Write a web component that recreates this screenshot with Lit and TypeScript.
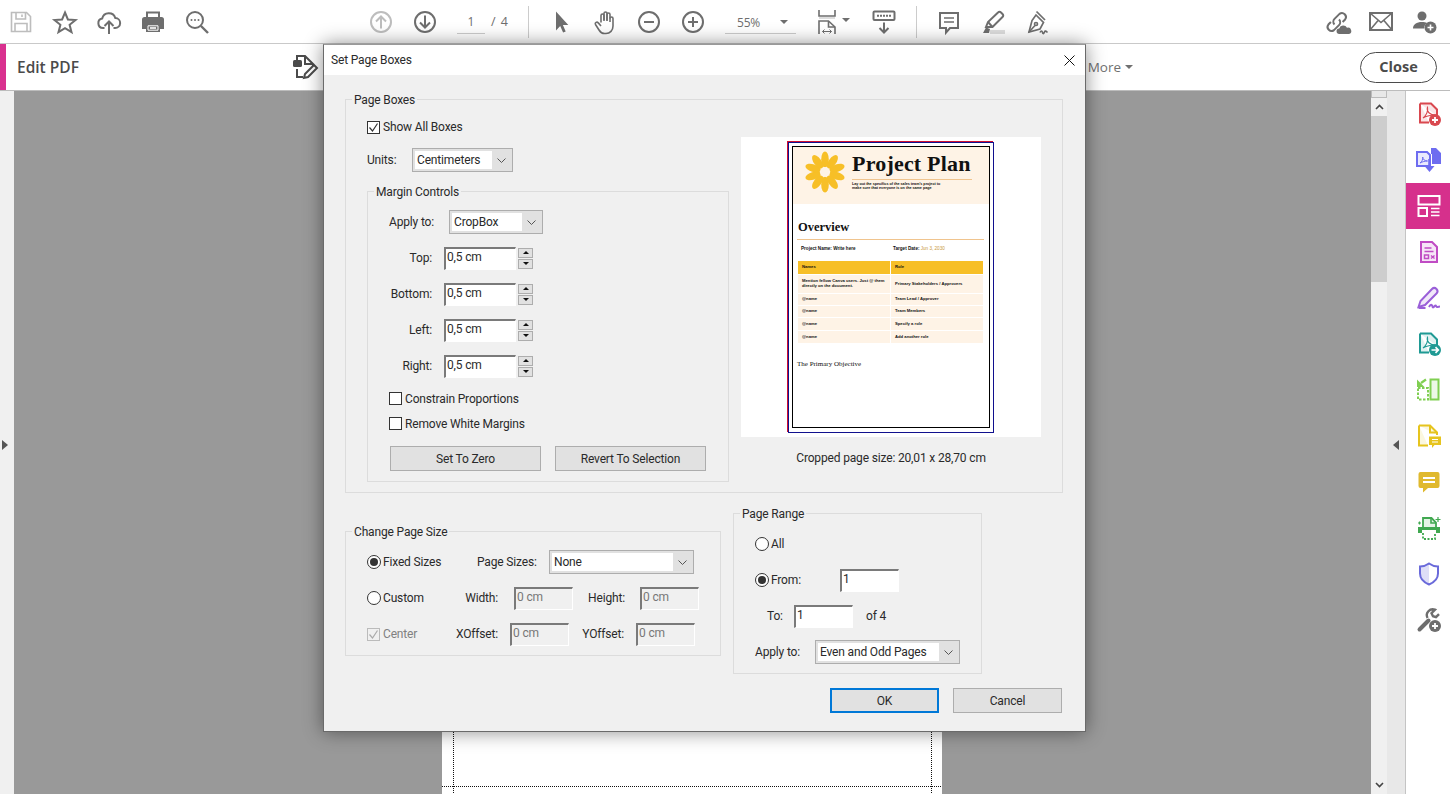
import { LitElement, html, svg, css } from 'lit';
import { customElement } from 'lit/decorators.js';

const ICONS: Record<string, unknown> = {
  save: svg`<g stroke-width="1.6"><path d="M2.5 2.5h15l4 4v15h-19z"/><path d="M7 2.5v6.5h9.5V2.5M13 4.5v2.5"/><path d="M6 21.5v-8h12v8"/></g>`,
  star: svg`<path d="M12 2.5l2.9 7 7.6.5-5.9 4.8 1.9 7.4-6.5-4-6.5 4 1.9-7.4L1.5 10l7.6-.5z"/>`,
  upload: svg`<path d="M7.5 18H6a4.8 4.8 0 0 1-.8-9.5A6.8 6.8 0 0 1 18.3 8a5 5 0 0 1-.3 10h-1.5"/><path d="M12 24V11.5M7.5 16l4.500-4.500 4.500 4.500"/>`,
  print: svg`<path d="M6 7V2.500h12V7"/><path class="f" d="M1 9.500a2.500 2.500 0 0 1 2.500-2.500h17A2.500 2.500 0 0 1 23 9.500V19h-4v-5H5v5H1z"/><path class="f" d="M5 14h14v8H5z"/><path d="M9 18h6" stroke="#fff" stroke-width="1.600"/><path d="M7 15.800h10v4.400H7z" stroke="#fff" stroke-width="1"/>`,
  find: svg`<circle cx="10" cy="10" r="8"/><path d="M16 16l7 7" stroke-width="2.400"/><circle class="f" cx="6.500" cy="10" r="1"/><circle class="f" cx="10" cy="10" r="1"/><circle class="f" cx="13.500" cy="10" r="1"/>`,
  up: svg`<circle cx="12" cy="12" r="10"/><path d="M12 18.500V6.500M7 11.500l5-5 5 5"/>`,
  down: svg`<circle cx="12" cy="12" r="10"/><path d="M12 5.500v12M7 12.500l5 5 5-5"/>`,
  cursor: svg`<path class="f" d="M7 1.500v19l4.200-4.600 2.900 6.600 2.600-1-2.800-6.600h5.400z"/>`,
  hand: svg`<g stroke-width="1.600"><path d="M8 12.500V5.500a1.500 1.500 0 0 1 3 0V11"/><path d="M11 10V3.500a1.500 1.500 0 0 1 3 0V11"/><path d="M14 10.500V4.500a1.500 1.500 0 0 1 3 0V12"/><path d="M17 8.500a1.500 1.500 0 0 1 3 0V16c0 4.400-3 7.500-7 7.500h-1.500c-2.500 0-4-1-5.500-3.500L2.500 14.500c-1-1.800 1.500-3.200 2.800-1.600L8 16"/></g>`,
  minus: svg`<circle cx="12" cy="12" r="10"/><path d="M7 12h10"/>`,
  plus: svg`<circle cx="12" cy="12" r="10"/><path d="M7 12h10M12 7v10"/>`,
  fit: svg`<path d="M4 0v6h16V0" stroke-width="1.600"/><path d="M4 8h16" stroke="#ddd" stroke-width="2"/><path d="M4 24V11h9.500l6.500 6v7" stroke-width="1.600"/><path d="M13.500 11v6h6.500" stroke-width="1.600"/><path d="M7.500 21.500h9M9.500 19.500l-2 2 2 2M14.500 19.500l2 2-2 2" stroke-width="1"/>`,
  bar: svg`<rect x="1.500" y="1.500" width="21" height="8.500" rx="1"/><path d="M5 5.800h14" stroke-dasharray="2 1" stroke-width="2"/><path d="M12 12.500v10M7.500 18l4.500 4.500 4.500-4.500"/>`,
  comment: svg`<path d="M3 3h18v15h-8l-4 4.500V18H3z"/><path d="M7 8h10M7 12h10" stroke-width="1.600"/>`,
  mark: svg`<path d="M5 17l2-5L17 2.500c1-1 2-1 3 0L21.500 4c1 1 1 2 0 3L11.500 17z"/><path d="M7 12l4.500 5" /><path class="f" d="M2 23l3-5.500 4 1.500-1 4z"/><rect class="lite" x="9" y="20" width="15" height="4"/>`,
  sign: svg`<g stroke-width="1.700"><path d="M11 5l7.500 7.500-3.500 6.500L4 22l3-11.500z"/><path d="M11.500 1.500l8.500 8.500"/><path d="M4 22l6-6.500"/><circle cx="11" cy="14" r="1.500"/></g><path d="M15 22.500c1-2 2-2 2.500 0s1.500 1 2-.5 1.500-1 3 .5" stroke-width="1.600"/>`,
  link: svg`<path d="M9.500 14.500a4 4 0 0 1 0-5.600l5-5a4 4 0 0 1 5.600 5.600l-2.500 2.500"/><path d="M14 9.500a4 4 0 0 1 0 5.600l-5 5a4 4 0 0 1-5.600-5.600l2.500-2.500"/><path class="f" d="M14.500 24a2.800 2.800 0 0 1-.3-5.600 4.200 4.200 0 0 1 7.800-.6 3.200 3.200 0 0 1 2 6.200z"/>`,
  mail: svg`<rect x="1" y="3" width="22" height="17"/><path d="M1 3l11 9.500L23 3M1 20l8.500-10M23 20l-8.500-10" stroke-width="1.600"/>`,
  user: svg`<circle class="f" cx="9" cy="6" r="4.500"/><path class="f" d="M0 18.500c0-4 3.500-6.500 9-6.500 2 0 3.700.4 5 1-1.800 1.200-2.800 3.200-2.900 5.500z"/><circle class="f" cx="17.500" cy="17.500" r="6"/><path d="M14.500 17.500h6M17.500 14.500v6" stroke="#fff" stroke-width="1.600"/>`,
  edit: svg`<path d="M4 5V1h8l8 8v2M4 14v8h6"/><path d="M12 1v8h8"/><rect class="f" x="0" y="5" width="9" height="7" rx="1.500"/><path d="M11 23l1-4 9-9 3 3-9 9z"/>`,

  pdfadd: svg`<path class="tint" d="M3 1.500h11l6 6v6.500M3 1.500v19h9"/><path d="M6 16c3-2 5.500-7 4.500-10.500-1.500 4 3 7.500 7 7.500-4 .2-8 .8-11.500 3z" stroke-width="1.100"/><circle class="f" cx="18" cy="18" r="6"/><path d="M15 18h6M18 15v6" stroke="#fff" stroke-width="1.800"/>`,
  combine: svg`<path class="tint" d="M0 4h10l3 3v11H0z"/><path class="f" d="M14 0h5l5 5v11h-9V6h-1z"/><path d="M3 15c2-1.500 3-3.500 2.700-6 0 2.500 2.300 4 4.800 4-2.500 0-5 .7-7.500 2z" stroke-width="1"/><path d="M12.500 11v10" stroke-width="2.600"/><path class="f" d="M7.500 18h10l-5 6z"/>`,
  layout: svg`<rect x="1.500" y="2" width="21" height="8.500"/><rect x="1.500" y="14" width="8.500" height="8"/><path d="M14 14.500h8.500M14 18h8.500M14 21.500h8.500" stroke-width="1.300"/>`,
  redact: svg`<path class="tint" d="M4 2h11l5 5v15H4z"/><path d="M7.500 8h7M7.500 11.500h9M7.500 15h4v3.500h-4z" stroke-width="1.500"/><path d="M14 15.500l3.500 3M17.500 15.500l-3.500 3" stroke-width="1.400"/>`,
  pensign: svg`<path class="tint" d="M1.500 21l2-6L15 3c1.500-1.500 3-1.500 4.500 0 1.500 1.500 1.500 3 0 4.500L8 19z"/><path d="M1.500 22h7"/><path d="M12 21c1.500-3 3-3 3.500-.5s2-1 3-1 .5 2 2 1.500 1.500-.5 2.500-.5"/>`,
  pdfout: svg`<path class="tint" d="M3 1.500h11l6 6v6.500M3 1.500v19h9"/><path d="M6 16c3-2 5.500-7 4.500-10.500-1.500 4 3 7.500 7 7.500-4 .2-8 .8-11.500 3z" stroke-width="1.100"/><circle class="f" cx="18" cy="18" r="6"/><path d="M14.500 18h6.500M18.500 15.200l2.800 2.800-2.800 2.800" stroke="#fff" stroke-width="1.700"/>`,
  organize: svg`<path d="M1 10h10v11.500H1z" stroke-dasharray="2.500 1.500"/><path class="tint" d="M13.500 1.500h8v20h-8z"/><path d="M4 5l5-3.500" stroke-width="2.200"/><path class="f" d="M0 1.500v7.500h7.500z"/>`,
  review: svg`<path class="tint" d="M2 1.500h11l7 7V11M2 1.500v20h9"/><path d="M13 1.500v7h7" /><path class="f" d="M12 12.500h12V21h-6.500L15 24v-3h-3z"/><path d="M15 15.500h6M15 18h6" stroke="#fff" stroke-width="1.200"/>`,
  note: svg`<path class="f" d="M3.500 2h17A2 2 0 0 1 22.500 4v12a2 2 0 0 1-2 2H11l-5 4.500V18H3.500a2 2 0 0 1-2-2V4a2 2 0 0 1 2-2z"/><path d="M6 8h12M6 12h12" stroke="#fff" stroke-width="2"/>`,
  printer: svg`<path class="tint" d="M6 12V2h8.500L19 6.500V12" stroke-width="1.800"/><path d="M14 2v5h5" stroke-width="1.600"/><path class="f" d="M1 11h22v6h-4v-3H5v3H1z"/><path d="M6 17v6h12v-6" stroke-dasharray="2 1.500" stroke-width="1.800"/><path d="M21 1v5M18.500 3.500h5M2.500 5.500v3M1 7h3" stroke-width="1.200"/>`,
  shield: svg`<path class="half" d="M12 1.500v21c-6-2.500-9-6-9-11V4.500c3.500 0 6.500-1.200 9-3z" stroke="none"/><path d="M12 1.500c2.500 1.800 5.500 3 9 3V11.500c0 5-3 8.500-9 11-6-2.500-9-6-9-11V4.500c3.500 0 6.500-1.200 9-3z"/>`,
  tools: svg`<path d="M2.500 21.500L11.500 12.500" stroke-width="4" stroke-linecap="round"/><path d="M10.500 10a6 6 0 0 1 7.500-8.300l-3.500 3.500 1.500 3 3 1 3-3" stroke-width="2.400"/><circle class="f" cx="18" cy="18" r="6"/><path d="M15 18h6M18 15v6" stroke="#fff" stroke-width="1.800"/>`,
};

const ic = (name: string) => html`<svg class="ic" viewBox="0 0 24 24">${ICONS[name]}</svg>`;
const chevron = html`<svg class="chev" viewBox="0 0 9 5"><path d="M.5.500l4 4 4-4"/></svg>`;
const caret = html`<svg class="caret" viewBox="0 0 10 5"><path d="M0 0h10L5 5z"/></svg>`;
const SIDE = [
  ['pdfadd', 'red'], ['combine', 'blue'], ['layout', 'on'], ['redact', 'magenta'], ['pensign', 'violet'], ['pdfout', 'teal'],
  ['organize', 'lime'], ['review', 'gold'], ['note', 'amber'], ['printer', 'green'], ['shield', 'indigo'], ['tools', 'gray'],
];
const ROLES = [
  ['Mention fellow Canva users. Just @ them directly on the document.', 'Primary Stakeholders / Approvers'],
  ['@name', 'Team Lead / Approver'],
  ['@name', 'Team Members'],
  ['@name', 'Specify a role'],
  ['@name', 'Add another role'],
];

@customElement('app-root')
export class AppRoot extends LitElement {
  static styles = css`
    :host { display: block; position: relative; width: 1450px; height: 794px; overflow: hidden; background: #fff; font-family: Roboto, "Liberation Sans", sans-serif; font-size: 12px; color: #222; }
    * { box-sizing: border-box; }
    .ic { width: 24px; height: 24px; display: block; fill: none; stroke: currentColor; stroke-width: 2; overflow: visible; }
    .ic .f { fill: currentColor; stroke: none; }
    .ic .tint { fill: color-mix(in srgb, currentColor 14%, transparent); }
    .ic .half { fill: color-mix(in srgb, currentColor 22%, transparent); }
    .ic .lite { fill: #ddd; stroke: none; }

    /* top toolbar */
    .tools { height: 44px; display: flex; align-items: center; background: #fff; border-bottom: 1px solid #c9c9c9; color: #6e6e6e; font-family: "Open Sans", sans-serif; }
    .cell { width: 44px; height: 43px; display: flex; align-items: center; justify-content: center; flex: none; }
    .cell.save { margin-left: -1px; color: #bdbdbd; }
    .cell.off { margin-left: 140px; color: #bdbdbd; }
    .pagebox { width: 28px; height: 22px; margin-left: 10px; border-bottom: 1px solid #ccc; text-align: center; line-height: 20px; font-size: 12px; margin-top: 2px; }
    .of { width: 37px; margin-left: 6px; font-size: 12.5px; word-spacing: 2px; }
    .sep { width: 1px; height: 32px; background: #ccc; flex: none; }
    .after { margin-left: 10px; }
    .zoombox { width: 71px; height: 22px; margin: 2px 0 0 10px; border-bottom: 1px solid #ccc; display: flex; align-items: center; font-size: 12px; padding-left: 12px; letter-spacing: -.2px; }
    .caret { width: 8px; height: 4px; fill: #6e6e6e; display: block; }
    .zoombox .caret { margin-left: 20px; }
    .fit { justify-content: flex-start; padding-left: 10px; margin-left: 9px; }
    .fit .caret { margin: -4px 0 0 3px; flex: none; }
    .barcell { margin-left: 13px; }
    .right { margin-left: auto; display: flex; padding-right: 3px; }

    /* tool title bar */
    .bar { height: 47px; display: flex; align-items: center; background: #fff; border-bottom: 1px solid #bcbcbc; color: #4b4b4b; font-family: "Open Sans", sans-serif; }
    .strip { width: 6px; height: 46px; background: #d9318f; flex: none; }
    .title { width: 276px; margin-left: 11px; font-size: 15.5px; font-weight: 600; }
    .more { margin-left: auto; margin-right: 227px; display: flex; align-items: center; gap: 4px; font-size: 13.5px; color: #707070; }
    .more .caret { fill: #707070; }
    .close { width: 77px; height: 31px; margin-right: 13px; border: 1.5px solid #4b4b4b; border-radius: 16px; text-align: center; line-height: 27px; font-size: 14.5px; font-weight: 700; }

    /* viewer */
    .view { height: 703px; display: flex; background: #fff; }
    .lpane { width: 14px; background: #f0f0f0; display: flex; align-items: center; flex: none; padding: 4px 0 0 2px; }
    .tri { width: 0; height: 0; border-top: 5px solid transparent; border-bottom: 5px solid transparent; }
    .tri.r { border-left: 6px solid #555; }
    .tri.l { border-right: 6px solid #555; }
    .doc { width: 1357px; background: #999; padding: 9px 0 0 428px; overflow: hidden; flex: none; }
    .page { width: 500px; height: 800px; background-color: #fff;
      background-image: repeating-linear-gradient(to bottom, #111 0 1px, transparent 1px 2px), repeating-linear-gradient(to bottom, #111 0 1px, transparent 1px 2px), repeating-linear-gradient(to right, #111 0 1px, transparent 1px 2px);
      background-size: 1px 100%, 1px 100%, 100% 1px; background-position: 11px 0, 489px 0, 0 686px; background-repeat: no-repeat; }
    .scroll { width: 16px; background: #f0f0f0; display: flex; flex-direction: column; flex: none; }
    .nub { height: 7px; background: #e8e8e8; border: 1px solid #bbb; border-top: 0; }
    .sbtn { height: 18px; display: flex; align-items: center; justify-content: center; }
    .sbtn svg { width: 9px; height: 6px; fill: none; stroke: #444; stroke-width: 1.6; }
    .thumb { height: 166px; background: #cdcdcd; }
    .gap { flex: 1; }
    .rail { width: 19px; background: #e8e8e8; border-right: 1px solid #c4c4c4; display: flex; align-items: center; justify-content: center; flex: none; padding-top: 4px; }
    .side { flex: 1; display: flex; flex-direction: column; background: #fff; }
    .tool { height: 46px; display: flex; align-items: center; justify-content: center; padding-left: 1px; }
    .red { color: #d9484f; } .blue { color: #6d6cf0; } .magenta { color: #c04cc4; } .violet { color: #9a5fd8; } .teal { color: #1f9a94; } .lime { color: #80cf52; }
    .gold { color: #e6c41e; } .amber { color: #e0b92e; } .green { color: #40a850; } .indigo { color: #6a6ada; } .gray { color: #6e6e6e; }
    .on { color: #fff; background: #d6308c; }

    /* dialog window */
    .dialog { position: absolute; left: 323px; top: 44px; width: 763px; height: 688px; background: #f0f0f0; border: 1px solid #6a6a6a; border-top-color: #999; box-shadow: 0 0 18px rgba(0, 0, 0, .45); letter-spacing: -.16px; color: #2a2a2a; }
    .dhead { height: 30px; background: #fff; display: flex; align-items: center; justify-content: space-between; padding: 0 10px 0 7px; }
    .x { width: 11px; height: 11px; stroke: #111; stroke-width: 1; fill: none; display: block; }
    .dbody { padding: 24px 22px 0 21px; }
    .group { border: 1px solid #dcdcdc; padding-left: 21px; }
    .legend { width: fit-content; height: 15px; line-height: 17px; margin: -8px 0 0 -15px; padding: 0 2px; background: #f0f0f0; white-space: nowrap; }
    .g-boxes { height: 394px; display: flex; flex-direction: column; }
    .cols { display: flex; gap: 12px; }
    .lcol { width: 362px; flex: none; }
    .rcol { width: 300px; flex: none; margin-top: 30px; }
    .row { display: flex; align-items: center; white-space: nowrap; }
    .h24 { height: 24px; }
    .check { width: 13px; height: 13px; border: 1px solid #333; background: #fff; margin-right: 3px; flex: none; display: flex; align-items: center; justify-content: center; }
    .check svg { width: 11px; height: 11px; stroke: #333; stroke-width: 1.200; fill: none; display: block; }
    .check.dis { border-color: #bbb; background: #f0f0f0; }
    .check.dis svg { stroke: #aaa; }
    .mt14 { margin-top: 14px; }
    .mt13 { margin-top: 13px; }
    .radio { width: 14px; height: 14px; border: 1px solid #333; border-radius: 50%; background: #fff; margin-right: 2px; flex: none; display: flex; align-items: center; justify-content: center; }
    .radio.sel::after { content: ""; width: 8px; height: 8px; border-radius: 50%; background: #333; }
    .select { height: 24px; border: 1px solid #adadad; background: #e1e1e1; padding: 2px; display: flex; align-items: center; flex: none; }
    .val { flex: 1; height: 18px; line-height: 18px; background: #fff; padding-left: 2px; }
    .arrow { width: 18px; display: flex; justify-content: center; }
    .chev { width: 9px; height: 5px; fill: none; stroke: #555; stroke-width: 1; display: block; }
    .s-units { width: 101px; margin-left: 15px; }
    .s-crop { width: 94px; }
    .s-page { width: 145px; }
    .s-range { width: 145px; }
    .units-label { width: 30px; }
    .g-margin { height: 291px; margin-top: 19px; }
    .apply { width: 60px; }
    .stack { display: flex; flex-direction: column; gap: 12px; }
    .g-margin .first { margin-top: 11px; }
    .g-margin .stack { margin-top: 12px; }
    .lab { width: 43px; margin-right: 12px; text-align: right; }
    .input { height: 23px; border: 2px solid #fff; border-top-color: #7a7a7a; border-left-color: #7a7a7a; border-right-width: 1px; border-bottom-width: 1px; background: #fff; padding-left: 1px; line-height: 17px; flex: none; overflow: hidden; }
    .input.dis { background: #f0f0f0; color: #777; }
    .i72 { width: 72px; }
    .i59 { width: 59px; }
    .spin { width: 15px; margin-left: 2px; display: flex; flex-direction: column; gap: 1px; flex: none; }
    .spin span { height: 10px; background: #e1e1e1; border: 1px solid #adadad; display: flex; align-items: center; justify-content: center; }
    .spin i { width: 0; height: 0; border-left: 3px solid transparent; border-right: 3px solid transparent; }
    .spin .u { border-bottom: 3px solid #111; }
    .spin .d { border-top: 3px solid #111; }
    .opts { margin-top: 14px; display: flex; flex-direction: column; gap: 12px; }
    .opts .row { height: 13px; }
    .btns { display: flex; gap: 14px; margin: 16px 0 0 1px; }
    .btn { height: 25px; background: #e1e1e1; border: 1px solid #adadad; display: flex; align-items: center; justify-content: center; flex: none; }
    .w151 { width: 151px; }
    .w109 { width: 109px; }
    .btn.def { border: 2px solid #0078d7; }

    /* crop preview */
    .preview { width: 300px; height: 300px; background: #fff; display: flex; align-items: flex-start; justify-content: center; padding-top: 5px; letter-spacing: 0; }
    .cap { margin-top: 14px; line-height: 15px; text-align: center; }
    .sheet { width: 206px; height: 291px; border: 1px solid #10108e; box-shadow: -1px -1px 0 #d01030; padding: 3px 3px 4px; background: #fff; }
    .pg { height: 100%; border: 1px solid #000; overflow: hidden; color: #111; font-family: "Liberation Sans", sans-serif; }
    .hero { height: 57px; background: #fef3e6; display: flex; padding-left: 10px; }
    .flower { width: 44px; height: 44px; margin-top: 3px; flex: none; }
    .hero-t { margin-left: 5px; padding-top: 5px; }
    .pt { font: 700 22px/24px "Liberation Serif", serif; letter-spacing: .2px; white-space: nowrap; }
    .prule { width: 120px; height: 1px; background: #f0c48e; margin-top: 3px; }
    .ps { font-size: 3.7px; line-height: 3.600px; font-weight: 700; margin-top: 3px; white-space: nowrap; }
    .ov { font: 700 12.500px/14px "Liberation Serif", serif; margin: 16px 0 0 5px; }
    .ovrule { width: 187px; height: 1px; background: #f0c48e; margin: 5px 0 0 4px; }
    .fields { display: flex; margin: 6px 0 0 8px; font-size: 4.600px; line-height: 6px; font-weight: 700; white-space: nowrap; }
    .fields div { width: 92px; }
    .date { color: #c9983c; font-weight: 400; }
    .tbl { display: grid; width: 185px; margin: 9px 0 0 5px; grid-template-columns: 92px 92px; grid-template-rows: 13px 18px 11px 11px 12px 12px; gap: 1px; font-size: 4.200px; line-height: 4.800px; font-weight: 700; }
    .tbl div { background: #fef3e6; padding: 0 3px 0 4px; display: flex; align-items: center; }
    .tbl .hd { background: #f7bf27; }
    .obj { font: 7px/10px "Liberation Serif", serif; margin: 16px 0 0 4px; white-space: nowrap; }

    /* lower panels */
    .lower { display: flex; align-items: flex-start; gap: 12px; }
    .g-size { width: 376px; height: 125px; margin-top: 38px; }
    .g-range { width: 249px; height: 161px; margin-top: 20px; }
    .g-size .stack, .g-range .stack { margin-top: 11px; }
    .opt110 { width: 110px; }
    .opt96 { width: 96px; }
    .opt89 { width: 89px; }
    .w72 { width: 72px; }
    .disabled { color: #808080; }
    .l-w { width: 51px; padding-right: 16px; text-align: right; }
    .l-x { width: 54px; padding-right: 12px; text-align: right; }
    .l-h { width: 54px; margin-left: 13px; padding-right: 15px; text-align: right; }
    .l-y { width: 54px; margin-left: 13px; padding-right: 12px; text-align: right; }
    .from { width: 85px; }
    .to { width: 39px; padding-left: 12px; }
    .apply-r { width: 60px; }
    .of4 { margin-left: 13px; }
    .footer { display: flex; justify-content: flex-end; gap: 14px; padding-right: 1px; margin-top: 14px; }
  `;

  spinRow(label: string) {
    return html`<div class="row h24">
      <span class="lab">${label}</span>
      <div class="input i72">0,5 cm</div>
      <div class="spin"><span><i class="u"></i></span><span><i class="d"></i></span></div>
    </div>`;
  }

  select(cls: string, value: string) {
    return html`<div class="select ${cls}"><div class="val">${value}</div><div class="arrow">${chevron}</div></div>`;
  }

  preview() {
    const petals = Array.from({ length: 10 }, (_, i) => svg`<ellipse cx="22" cy="9.500" rx="3.800" ry="8" fill="#f7bf27" transform="rotate(${i * 36} 22 22)"/>`);
    return html`<div class="preview"><div class="sheet"><div class="pg">
      <div class="hero">
        <svg class="flower" viewBox="0 0 44 44">${petals}<circle cx="22" cy="22" r="5" fill="#fef3e6"/></svg>
        <div class="hero-t">
          <div class="pt">Project Plan</div>
          <div class="prule"></div>
          <div class="ps">Lay out the specifics of the sales team's project to<br>make sure that everyone is on the same page</div>
        </div>
      </div>
      <div class="ov">Overview</div>
      <div class="ovrule"></div>
      <div class="fields"><div>Project Name: Write here</div><div>Target Date: <span class="date">Jun 3, 2030</span></div></div>
      <div class="tbl">
        <div class="hd">Names</div><div class="hd">Role</div>
        ${ROLES.map(r => html`<div>${r[0]}</div><div>${r[1]}</div>`)}
      </div>
      <div class="obj">The Primary Objective</div>
    </div></div></div>`;
  }

  dialog() {
    const tick = html`<svg viewBox="0 0 11 11"><path d="M1.500 5.500l3 3.500 5-7.500"/></svg>`;
    return html`<div class="dialog">
      <div class="dhead"><span>Set Page Boxes</span><svg class="x" viewBox="0 0 11 11"><path d="M.500.500l10 10M10.500.500l-10 10"/></svg></div>
      <div class="dbody">
        <div class="group g-boxes">
          <div class="legend">Page Boxes</div>
          <div class="cols">
            <div class="lcol">
              <div class="row mt13"><span class="check">${tick}</span>Show All Boxes</div>
              <div class="row h24 mt14"><span class="units-label">Units:</span>${this.select('s-units', 'Centimeters')}</div>
              <div class="group g-margin">
                <div class="legend">Margin Controls</div>
                <div class="row h24 first"><span class="apply">Apply to:</span>${this.select('s-crop', 'CropBox')}</div>
                <div class="stack">
                  ${['Top:', 'Bottom:', 'Left:', 'Right:'].map(l => this.spinRow(l))}
                </div>
                <div class="opts">
                  <div class="row"><span class="check"></span>Constrain Proportions</div>
                  <div class="row"><span class="check"></span>Remove White Margins</div>
                </div>
                <div class="btns"><div class="btn w151">Set To Zero</div><div class="btn w151">Revert To Selection</div></div>
              </div>
            </div>
            <div class="rcol">
              ${this.preview()}
              <div class="cap">Cropped page size: 20,01 x 28,70 cm</div>
            </div>
          </div>
        </div>
        <div class="lower">
          <div class="group g-size">
            <div class="legend">Change Page Size</div>
            <div class="stack">
              <div class="row h24">
                <span class="row opt110"><span class="radio sel"></span>Fixed Sizes</span>
                <span class="w72">Page Sizes:</span>${this.select('s-page', 'None')}
              </div>
              <div class="row h24">
                <span class="row opt96"><span class="radio"></span>Custom</span>
                <span class="l-w">Width:</span><div class="input dis i59">0 cm</div>
                <span class="l-h">Height:</span><div class="input dis i59">0 cm</div>
              </div>
              <div class="row h24">
                <span class="row opt89 disabled"><span class="check dis">${tick}</span>Center</span>
                <span class="l-x">XOffset:</span><div class="input dis i59">0 cm</div>
                <span class="l-y">YOffset:</span><div class="input dis i59">0 cm</div>
              </div>
            </div>
          </div>
          <div class="group g-range">
            <div class="legend">Page Range</div>
            <div class="stack">
              <div class="row h24"><span class="radio"></span>All</div>
              <div class="row h24"><span class="row from"><span class="radio sel"></span>From:</span><div class="input i59">1</div></div>
              <div class="row h24"><span class="to">To:</span><div class="input i59">1</div><span class="of4">of 4</span></div>
              <div class="row h24"><span class="apply-r">Apply to:</span>${this.select('s-range', 'Even and Odd Pages')}</div>
            </div>
          </div>
        </div>
        <div class="footer"><div class="btn def w109">OK</div><div class="btn w109">Cancel</div></div>
      </div>
    </div>`;
  }

  render() {
    const cell = (n: string) => html`<div class="cell">${ic(n)}</div>`;
    return html`
      <div class="tools">
        <div class="cell save">${ic('save')}</div>
        ${['star', 'upload', 'print', 'find'].map(cell)}
        <div class="cell off">${ic('up')}</div>
        ${cell('down')}
        <div class="pagebox">1</div>
        <div class="of">/ 4</div>
        <div class="sep"></div>
        <div class="after"></div>
        ${['cursor', 'hand', 'minus', 'plus'].map(cell)}
        <div class="zoombox">55%${caret}</div>
        <div class="cell fit">${ic('fit')}${caret}</div>
        <div class="cell barcell">${ic('bar')}</div>
        <div class="sep after"></div>
        <div class="after"></div>
        ${['comment', 'mark', 'sign'].map(cell)}
        <div class="right">${['link', 'mail', 'user'].map(cell)}</div>
      </div>
      <div class="bar">
        <div class="strip"></div>
        <div class="title">Edit PDF</div>
        ${ic('edit')}
        <div class="more">More ${caret}</div>
        <div class="close">Close</div>
      </div>
      <div class="view">
        <div class="lpane"><div class="tri r"></div></div>
        <div class="doc"><div class="page"></div></div>
        <div class="scroll">
          <div class="nub"></div>
          <div class="sbtn"><svg viewBox="0 0 9 6"><path d="M1 5l3.500-3.500L8 5"/></svg></div>
          <div class="thumb"></div>
          <div class="gap"></div>
          <div class="sbtn"><svg viewBox="0 0 9 6"><path d="M1 1l3.500 3.500L8 1"/></svg></div>
        </div>
        <div class="rail"><div class="tri l"></div></div>
        <div class="side">${SIDE.map(s => html`<div class="tool ${s[1]}">${ic(s[0])}</div>`)}</div>
      </div>
      ${this.dialog()}
    `;
  }
}
